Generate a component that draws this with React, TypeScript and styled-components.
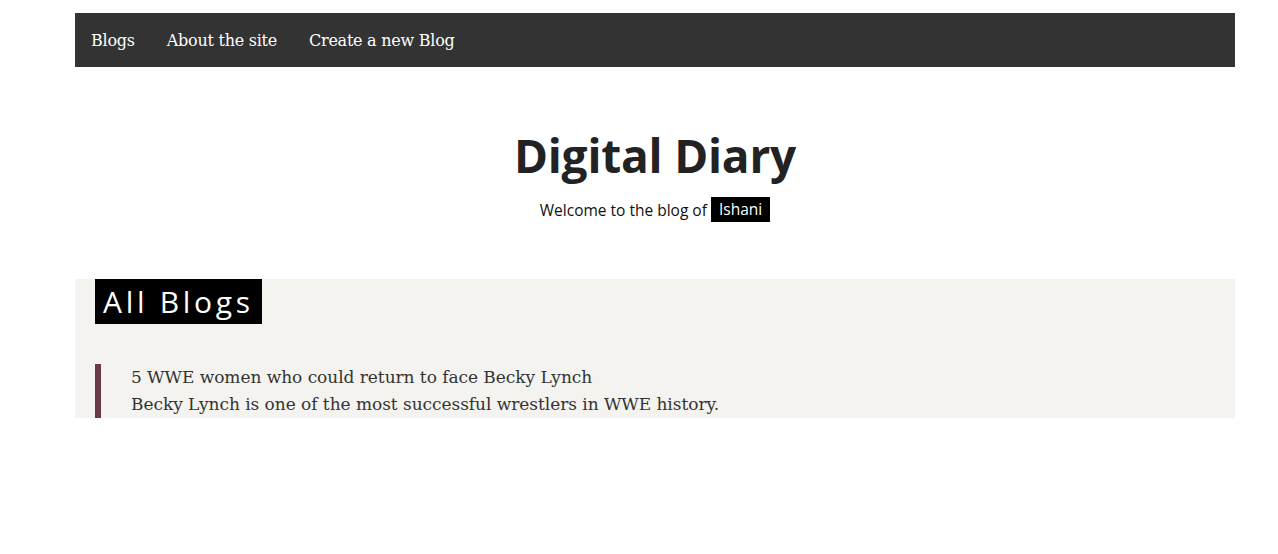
import React from "react";
import styled, { createGlobalStyle } from "styled-components";

const Global = createGlobalStyle`
  html, body { margin: 0; padding: 0; background: #fff; }
  body { font-family: "DejaVu Serif", serif; }
`;

const Page = styled.div`
  padding: 13px 43px 0 75px;
`;

const Nav = styled.nav`
  display: flex;
  align-items: center;
  height: 54px;
  background: #333333;
  padding: 0 16px;
  gap: 32px;
`;

const NavLink = styled.a`
  color: #ffffff;
  font-family: "DejaVu Serif", serif;
  font-size: 16px;
  text-decoration: none;
  letter-spacing: -0.25px;
`;

const Header = styled.header`
  display: flex;
  flex-direction: column;
  align-items: center;
  padding-top: 56px;
  height: 212px;
  box-sizing: border-box;
`;

const Title = styled.h1`
  margin: 0;
  font-family: "Open Sans", sans-serif;
  font-weight: 700;
  font-size: 46px;
  line-height: 64px;
  letter-spacing: -0.2px;
  color: #222;
`;

const Welcome = styled.p`
  margin: 10px 0 0;
  font-family: "Open Sans", sans-serif;
  font-size: 15.5px;
  color: #111;
  display: flex;
  align-items: center;
  gap: 4px;
`;

const Name = styled.span`
  background: #000;
  color: #fff;
  padding: 1px 8px 2px;
`;

const Section = styled.section`
  background: #f4f3f0;
  padding: 0 20px;
  height: 139px;
  overflow: hidden;
`;

const SectionTitle = styled.h2`
  display: inline-block;
  margin: 0;
  background: #000;
  color: #fff;
  font-family: "Open Sans", sans-serif;
  font-weight: 400;
  font-size: 30px;
  letter-spacing: 3.7px;
  line-height: 45px;
  padding: 0 8px;
`;

const Post = styled.article`
  margin-top: 40px;
  border-left: 6px solid #6b3a47;
  padding-left: 30px;
  font-family: "DejaVu Serif", serif;
  font-size: 17px;
  line-height: 27px;
  color: #333;
  letter-spacing: -0.05px;
`;

const Line = styled.div``;

export default function App() {
  return (
    <>
      <Global />
      <Page>
        <Nav>
          <NavLink href="#">Blogs</NavLink>
          <NavLink href="#">About the site</NavLink>
          <NavLink href="#">Create a new Blog</NavLink>
        </Nav>
        <Header>
          <Title>Digital Diary</Title>
          <Welcome>
            Welcome to the blog of <Name>Ishani</Name>
          </Welcome>
        </Header>
        <Section>
          <SectionTitle>All Blogs</SectionTitle>
          <Post>
            <Line>5 WWE women who could return to face Becky Lynch</Line>
            <Line>Becky Lynch is one of the most successful wrestlers in WWE history.</Line>
          </Post>
        </Section>
      </Page>
    </>
  );
}
